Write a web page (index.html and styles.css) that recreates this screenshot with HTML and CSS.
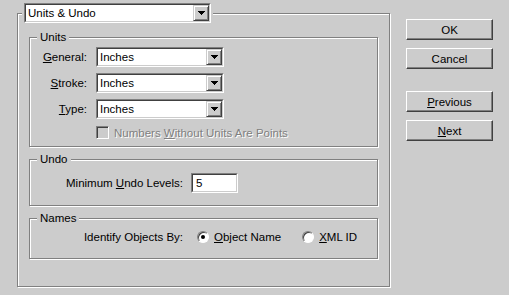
FILE: index.html
```html
<!DOCTYPE html>
<html lang="en">
<head>
  <meta charset="UTF-8">
  <title>Units &amp; Undo</title>
  <link rel="stylesheet" href="styles.css">
</head>
<body>
  <div class="dialog">
    <fieldset class="panel">
      <legend class="panel-title">
        <div class="combo combo-page">
          <div class="combo-in">
            <span class="combo-text">Units &amp; Undo</span>
            <span class="drop"><svg width="7" height="4"><rect x="0" y="0" width="7" height="1"/><rect x="1" y="1" width="5" height="1"/><rect x="2" y="2" width="3" height="1"/><rect x="3" y="3" width="1" height="1"/></svg></span>
          </div>
        </div>
      </legend>

      <fieldset class="group group-units">
        <legend>Units</legend>
        <div class="unit-grid">
          <label class="lbl"><u>G</u>eneral:</label>
          <div class="combo">
            <div class="combo-in">
              <span class="combo-text">Inches</span>
              <span class="drop"><svg width="7" height="4"><rect x="0" y="0" width="7" height="1"/><rect x="1" y="1" width="5" height="1"/><rect x="2" y="2" width="3" height="1"/><rect x="3" y="3" width="1" height="1"/></svg></span>
            </div>
          </div>

          <label class="lbl"><u>S</u>troke:</label>
          <div class="combo">
            <div class="combo-in">
              <span class="combo-text">Inches</span>
              <span class="drop"><svg width="7" height="4"><rect x="0" y="0" width="7" height="1"/><rect x="1" y="1" width="5" height="1"/><rect x="2" y="2" width="3" height="1"/><rect x="3" y="3" width="1" height="1"/></svg></span>
            </div>
          </div>

          <label class="lbl"><u>T</u>ype:</label>
          <div class="combo">
            <div class="combo-in">
              <span class="combo-text">Inches</span>
              <span class="drop"><svg width="7" height="4"><rect x="0" y="0" width="7" height="1"/><rect x="1" y="1" width="5" height="1"/><rect x="2" y="2" width="3" height="1"/><rect x="3" y="3" width="1" height="1"/></svg></span>
            </div>
          </div>

          <div class="check-row">
            <span class="check"></span>
            <span class="disabled">Numbers <u>W</u>ithout Units Are Points</span>
          </div>
        </div>
      </fieldset>

      <fieldset class="group group-undo">
        <legend>Undo</legend>
        <div class="row">
          <label class="lbl lbl-wide">Minimum <u>U</u>ndo Levels:</label>
          <div class="field"><div class="field-in">5</div></div>
        </div>
      </fieldset>

      <fieldset class="group group-names">
        <legend>Names</legend>
        <div class="row">
          <label class="lbl lbl-wide">Identify Objects By:</label>
          <span class="radio checked"></span>
          <span class="radio-text"><u>O</u>bject Name</span>
          <span class="radio second"></span>
          <span class="radio-text"><u>X</u>ML ID</span>
        </div>
      </fieldset>
    </fieldset>

    <div class="buttons">
      <button class="btn">OK</button>
      <button class="btn">Cancel</button>
      <button class="btn btn-gap"><u>P</u>revious</button>
      <button class="btn"><u>N</u>ext</button>
    </div>
  </div>
</body>
</html>
```

FILE: styles.css
```css
body {
  margin: 0;
  width: 509px;
  height: 295px;
  overflow: hidden;
  background: #cccccc;
  color: #000;
  font-family: "Liberation Sans", Arial, sans-serif;
  font-size: 11.5px;
}

u {
  text-decoration-thickness: 1px;
  text-underline-offset: 1px;
}

.dialog {
  display: flex;
  align-items: flex-start;
  gap: 16px;
  padding: 3px 0 0 17px;
}

/* etched group boxes */
.panel,
.group {
  box-sizing: border-box;
  margin: 0;
  border: 1px solid #808080;
  box-shadow: 1px 1px 0 #fff, inset 1px 1px 0 #fff;
}

.panel {
  width: 373px;
  padding: 7px 11px 27px 11px;
}

.panel-title {
  margin-left: -7px;
  padding: 0 2px;
  background: #cccccc;
}

.group {
  padding: 0;
  min-width: 0;
}

.group legend {
  margin-left: 7px;
  padding: 0 3px;
  line-height: 14px;
  background: #cccccc;
}

.group-units {
  padding: 3px 0 7px 0;
}

.group-undo {
  margin-top: 5px;
  padding: 7px 0 12px 0;
}

.group-names {
  margin-top: 5px;
  padding: 2px 0 11px 0;
}

/* sunken combo box */
.combo,
.field {
  box-sizing: border-box;
  height: 20px;
  border: 1px solid;
  border-color: #808080 #fff #fff #808080;
}

.combo-in,
.field-in {
  box-sizing: border-box;
  height: 18px;
  border: 1px solid;
  border-color: #404040 #cccccc #cccccc #404040;
  background: #fff;
  display: flex;
  align-items: center;
}

.combo-page {
  width: 187px;
}

.combo-text {
  flex: 1;
  padding-left: 2px;
  line-height: 16px;
  white-space: nowrap;
}

.drop {
  box-sizing: border-box;
  width: 16px;
  height: 16px;
  border: 1px solid;
  border-color: #cccccc #404040 #404040 #cccccc;
  box-shadow: inset 1px 1px 0 #fff, inset -1px -1px 0 #808080;
  background: #cccccc;
  display: flex;
  align-items: center;
  justify-content: center;
}

.drop svg {
  display: block;
  fill: #000;
}

.unit-grid {
  display: grid;
  grid-template-columns: 57px 128px;
  grid-template-rows: 20px 20px 20px 14px;
  column-gap: 9px;
  row-gap: 6px;
  align-items: center;
}

.lbl {
  text-align: right;
  white-space: nowrap;
}

.check-row {
  grid-column: 2;
  display: flex;
  align-items: center;
  gap: 5px;
  height: 13px;
  margin-top: 1px;
  align-self: start;
}

.check {
  box-sizing: border-box;
  width: 13px;
  height: 13px;
  flex: none;
  border: 1px solid;
  border-color: #808080 #fff #fff #808080;
  box-shadow: inset 1px 1px 0 #404040;
}

.disabled {
  color: #808080;
  text-shadow: 1px 1px 0 #fff;
  white-space: nowrap;
}

.row {
  display: flex;
  align-items: center;
  height: 20px;
}

.lbl-wide {
  width: 153px;
}

.field {
  width: 47px;
  margin-left: 8px;
}

.field-in {
  padding-left: 3px;
}

.radio {
  position: relative;
  box-sizing: border-box;
  width: 12px;
  height: 12px;
  flex: none;
  margin-left: 14px;
  border-radius: 50%;
  border: 1px solid;
  border-color: #808080 #fff #fff #808080;
  box-shadow: inset 1px 1px 0 #404040;
  background: #fff;
}

.radio.second {
  margin-left: 21px;
}

.radio.checked::after {
  content: "";
  position: absolute;
  left: 3px;
  top: 3px;
  width: 4px;
  height: 4px;
  border-radius: 50%;
  background: #000;
}

.radio-text {
  margin-left: 5px;
  white-space: nowrap;
}

.buttons {
  display: flex;
  flex-direction: column;
  gap: 8px;
  margin-top: 16px;
}

.btn {
  box-sizing: border-box;
  width: 87px;
  height: 21px;
  padding: 0;
  border: 1px solid;
  border-color: #fff #404040 #404040 #fff;
  box-shadow: inset -1px -1px 0 #808080;
  background: #cccccc;
  color: #000;
  font: inherit;
}

.btn-gap {
  margin-top: 14px;
}
```
